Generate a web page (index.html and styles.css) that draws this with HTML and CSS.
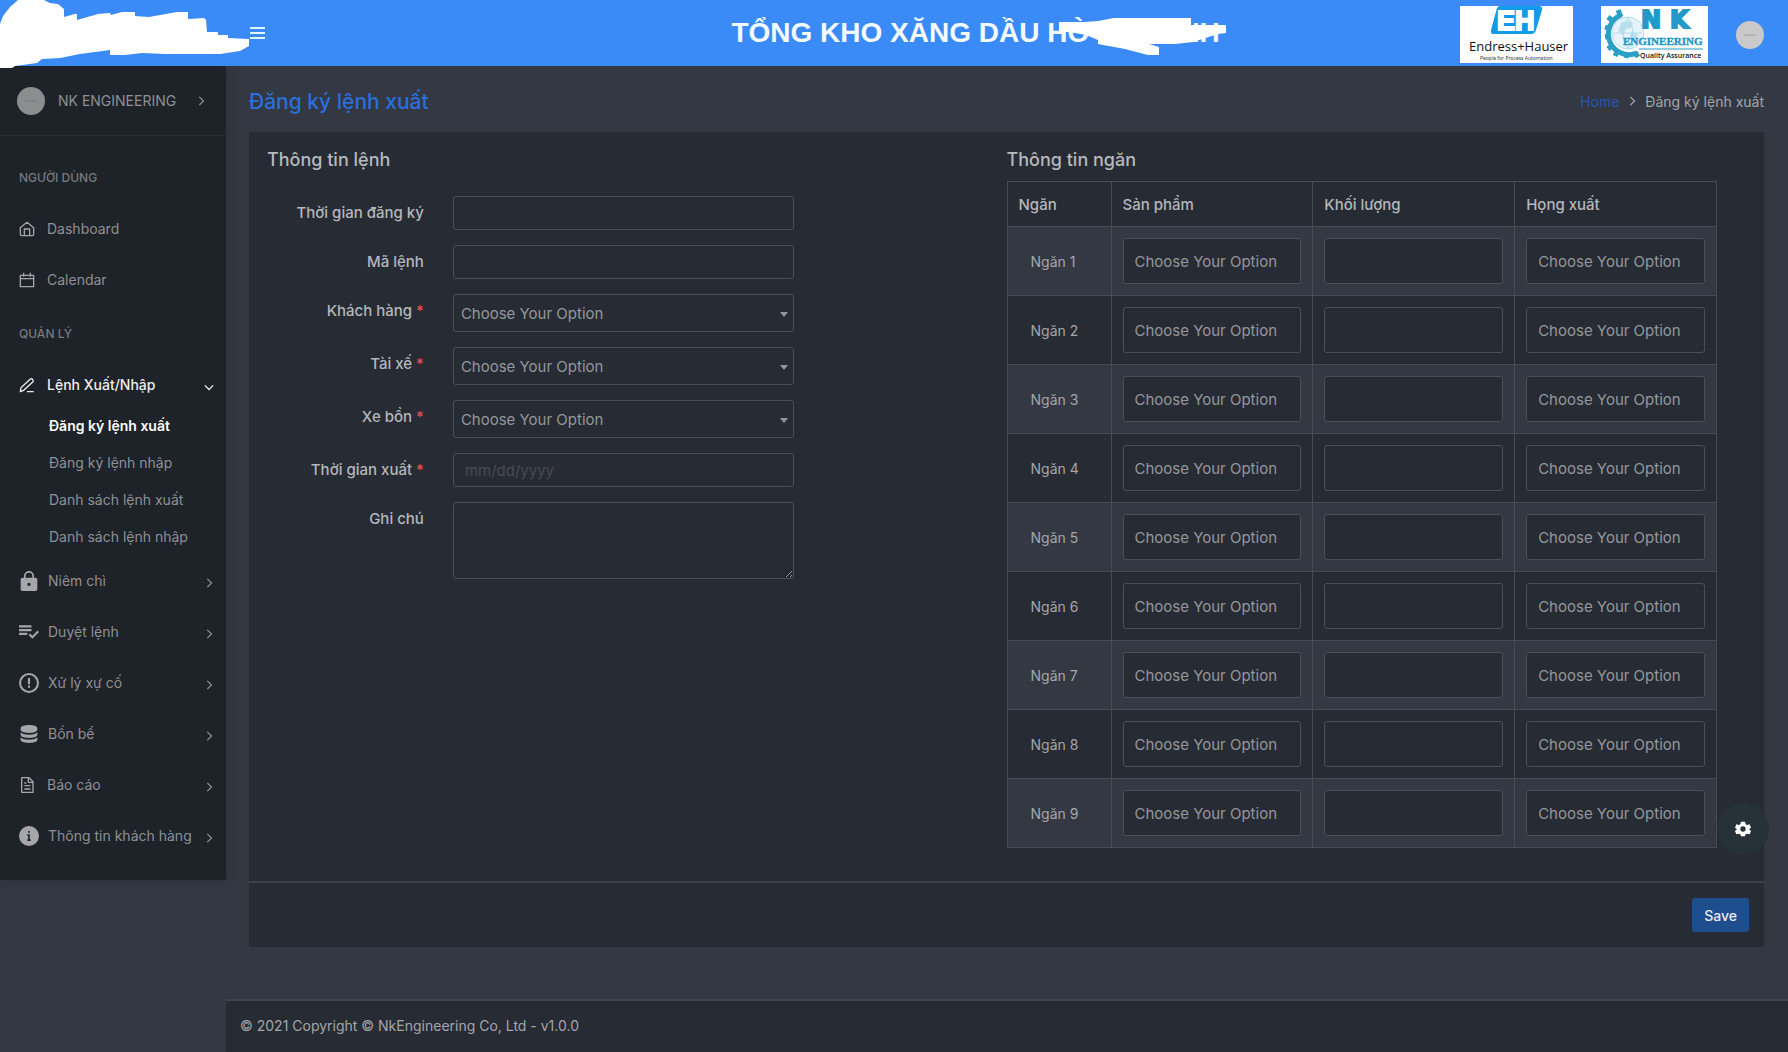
FILE: index.html
```html
<!DOCTYPE html>
<html lang="vi">
<head>
<meta charset="utf-8">
<title>Đăng ký lệnh xuất</title>
<link rel="stylesheet" href="styles.css">
</head>
<body>
<header class="topbar">
  <svg class="brand-mask" width="250" height="69" viewBox="0 0 250 69" aria-hidden="true"><path fill="#fff" d="M0 24 3 16 10 7 18 0H44L50 3 58 4 64 9V17L75 14H77V20L98 14 110 13 111 15 122 12H135V16L149 17 177 12H188V19L204 18 206 20 207 32H218V35H228V38L249 39V46L240 51 220 54H165L142 53 125 55H110V50L80 54 60 58 42 59 37 63 15 66 12 68H0Z"/></svg>
  <button class="menu-btn" type="button" aria-label="Menu"><span></span><span></span><span></span></button>
  <div class="title-wrap">
    <h1 class="site-title">TỔNG KHO XĂNG DẦU HÒ<span class="title-gap"></span>NH
      <svg class="title-mask" width="168" height="38" viewBox="0 0 168 38" aria-hidden="true"><path fill="#fff" d="M0 4H25L39 3 55 0H132V7H167V15L159 16 134 24 116 26H90L100 29V37H89L66 31 39 26V22L27 17 16 15 0 13Z"/></svg>
    </h1>
  </div>
  <div class="logos">
    <svg class="logo" width="113" height="57" viewBox="0 0 113 57" role="img" aria-label="Endress+Hauser">
      <rect width="113" height="57" fill="#fff"/>
      <path d="M39 0H79Q83 0 82 4L76 24Q75 28 71 28H34Q30 28 31 24L37 2Z" fill="#119be8"/>
      <text x="37" y="24" font-family="Liberation Sans" font-size="27" font-weight="700" fill="#fff" stroke="#fff" stroke-width="2">EH</text>
      <text x="9" y="45" font-family="Open Sans" font-size="13" fill="#111">Endress+Hauser</text>
      <text x="20" y="54" font-family="Noto Sans" font-size="5" fill="#333">People for Process Automation</text>
    </svg>
    <svg class="logo" width="107" height="57" viewBox="0 0 107 57" role="img" aria-label="NK Engineering, Quality Assurance">
      <rect width="107" height="57" fill="#fff"/>
      <path d="M20 9A19 19 0 0 0 36 47" fill="none" stroke="#2b9fc4" stroke-width="5"/>
      <path d="M20 11 17 4M13 16 7 11M10 23 4 21M9 30 4 31M12 39 7 43M17 44 14 50M26 47 25 52M34 46 37 51" stroke="#2b9fc4" stroke-width="5"/>
      <circle cx="27" cy="27" r="16" fill="#e5f4fa" stroke="#b5dcec"/>
      <path d="M20 17Q26 13 32 17L30 22 25 23 22 29 17 25ZM31 25 37 29 33 36 28 32Z" fill="#badfed"/>
      <path d="M13 27H41M27 11Q17 27 27 43M27 11Q37 27 27 43" fill="none" stroke="#b5dcec"/>
      <g font-family="DejaVu Sans" font-size="24" font-weight="700" fill="#2299c6" stroke="#2299c6" stroke-width="2"><text x="40" y="22">N</text><text x="69" y="22">K</text></g>
      <text x="22" y="39" font-family="Liberation Serif" font-size="11" font-weight="700" fill="#2299c6" stroke="#2299c6" stroke-width=".4">ENGINEERING</text>
      <path d="M38 43H102" stroke="#2299c6"/>
      <text x="39" y="52" font-family="Open Sans" font-size="7" font-weight="600" fill="#111">Quality Assurance</text>
    </svg>
  </div>
  <a class="avatar avatar-top" href="#" aria-label="Tài khoản"><span></span></a>
</header>

<div class="shell">
  <aside class="sidebar">
    <a class="user" href="#">
      <span class="avatar"><span></span></span>
      <span class="user-name">NK ENGINEERING</span>
      <svg class="chev" viewBox="0 0 12 12"><path d="M4 1 9 6 4 11"/></svg>
    </a>
    <nav class="nav">
      <h2 class="nav-head">NGƯỜI DÙNG</h2>
      <a class="item" href="#"><svg class="ico line" viewBox="0 0 24 24"><path d="M2 10 12 2l10 8v10a2 2 0 0 1-2 2H4a2 2 0 0 1-2-2ZM8 22V12h8v10"/></svg>Dashboard</a>
      <a class="item" href="#"><svg class="ico line" viewBox="0 0 24 24"><path d="M2 5h20v17H2ZM2 10h20M7 1v6M17 1v6"/></svg>Calendar</a>
      <h2 class="nav-head">QUẢN LÝ</h2>
      <a class="item open" href="#"><svg class="ico line" viewBox="0 0 24 24"><path d="M12 22h10M17 3a3 3 0 0 1 4 4L7 20l-5 2 1-6Z"/></svg>Lệnh Xuất/Nhập<svg class="chev" viewBox="0 0 12 12"><path d="M1 4 6 9 11 4"/></svg></a>
      <div class="sub">
        <a class="current" href="#">Đăng ký lệnh xuất</a>
        <a href="#">Đăng ký lệnh nhập</a>
        <a href="#">Danh sách lệnh xuất</a>
        <a href="#">Danh sách lệnh nhập</a>
      </div>
      <a class="item" href="#"><svg class="ico big" viewBox="0 0 24 24"><path fill-rule="evenodd" d="M20 8h-2V6A6 6 0 0 0 6 6v2H4a2 2 0 0 0-2 2v12c0 1 1 2 2 2h16c1 0 2-1 2-2V10c0-1-1-2-2-2ZM12 18a2 2 0 1 1 0-4 2 2 0 0 1 0 4ZM8 8V6a4 4 0 0 1 8 0v2Z"/></svg>Niêm chì<svg class="chev" viewBox="0 0 12 12"><path d="M4 1 9 6 4 11"/></svg></a>
      <a class="item" href="#"><svg class="ico big" viewBox="0 0 24 24"><path d="M0 4h15v2.500H0ZM0 8.500h15V11H0ZM0 13h10v2.500H0ZM24 12l-8 8L11.500 15.500l1.800-1.800L16 16.400l6.200-6.200Z"/></svg>Duyệt lệnh<svg class="chev" viewBox="0 0 12 12"><path d="M4 1 9 6 4 11"/></svg></a>
      <a class="item" href="#"><svg class="ico big" viewBox="0 0 24 24"><path fill-rule="evenodd" d="M12 0a12 12 0 1 0 0 24 12 12 0 0 0 0-24ZM12 2.500a9.500 9.500 0 1 1 0 19 9.500 9.500 0 0 1 0-19ZM10.700 6h2.600v7.500h-2.600ZM10.700 15h2.600v2.600h-2.600Z"/></svg>Xử lý xự cố<svg class="chev" viewBox="0 0 12 12"><path d="M4 1 9 6 4 11"/></svg></a>
      <a class="item" href="#"><svg class="ico big" viewBox="0 0 24 24"><path d="M2 5c0-5 20-5 20 0v2c0 5-20 5-20 0ZM2 10c3 4 17 4 20 0v3c0 5-20 5-20 0ZM2 16c3 4 17 4 20 0v3c0 5-20 5-20 0Z"/></svg>Bồn bể<svg class="chev" viewBox="0 0 12 12"><path d="M4 1 9 6 4 11"/></svg></a>
      <a class="item" href="#"><svg class="ico line" viewBox="0 0 24 24"><path d="M4 1h11l6 6v16H4ZM14 1v7h7M8 9h3M8 13h9M8 18h9"/></svg>Báo cáo<svg class="chev" viewBox="0 0 12 12"><path d="M4 1 9 6 4 11"/></svg></a>
      <a class="item" href="#"><svg class="ico big" viewBox="0 0 24 24"><path fill-rule="evenodd" d="M12 0a12 12 0 1 0 0 24 12 12 0 0 0 0-24ZM11 6h2v2h-2ZM10 10h3v6h1v2h-4v-2h1v-4h-1Z"/></svg>Thông tin khách hàng<svg class="chev" viewBox="0 0 12 12"><path d="M4 1 9 6 4 11"/></svg></a>
    </nav>
  </aside>

  <div class="page">
    <main class="content">
      <div class="page-head">
        <h2 class="page-title">Đăng ký lệnh xuất</h2>
        <nav class="crumbs"><a href="#">Home</a><svg class="chev" viewBox="0 0 12 12"><path d="M4 1 9 6 4 11"/></svg><span>Đăng ký lệnh xuất</span></nav>
      </div>
      <form class="card">
        <div class="card-body">
          <section class="info">
            <h3>Thông tin lệnh</h3>
            <div class="row"><label for="reg">Thời gian đăng ký</label><input class="field" id="reg" type="text"></div>
            <div class="row"><label for="code">Mã lệnh</label><input class="field" id="code" type="text"></div>
            <div class="row"><label for="cust">Khách hàng <b>*</b></label><div class="select"><select class="field" id="cust"><option>Choose Your Option</option></select></div></div>
            <div class="row"><label for="driver">Tài xế <b>*</b></label><div class="select"><select class="field" id="driver"><option>Choose Your Option</option></select></div></div>
            <div class="row"><label for="truck">Xe bồn <b>*</b></label><div class="select"><select class="field" id="truck"><option>Choose Your Option</option></select></div></div>
            <div class="row"><label for="date">Thời gian xuất <b>*</b></label><input class="field" id="date" type="text" placeholder="mm/dd/yyyy"></div>
            <div class="row"><label for="note">Ghi chú</label><textarea class="field" id="note"></textarea></div>
          </section>
          <section class="slots">
            <h3>Thông tin ngăn</h3>
            <table>
              <thead><tr><th class="c-slot">Ngăn</th><th>Sản phẩm</th><th>Khối lượng</th><th>Họng xuất</th></tr></thead>
              <tbody>
                <tr><td>Ngăn 1</td><td><select class="field" aria-label="Sản phẩm 1"><option>Choose Your Option</option></select></td><td><input class="field" aria-label="Khối lượng 1"></td><td><select class="field" aria-label="Họng xuất 1"><option>Choose Your Option</option></select></td></tr>
                <tr><td>Ngăn 2</td><td><select class="field" aria-label="Sản phẩm 2"><option>Choose Your Option</option></select></td><td><input class="field" aria-label="Khối lượng 2"></td><td><select class="field" aria-label="Họng xuất 2"><option>Choose Your Option</option></select></td></tr>
                <tr><td>Ngăn 3</td><td><select class="field" aria-label="Sản phẩm 3"><option>Choose Your Option</option></select></td><td><input class="field" aria-label="Khối lượng 3"></td><td><select class="field" aria-label="Họng xuất 3"><option>Choose Your Option</option></select></td></tr>
                <tr><td>Ngăn 4</td><td><select class="field" aria-label="Sản phẩm 4"><option>Choose Your Option</option></select></td><td><input class="field" aria-label="Khối lượng 4"></td><td><select class="field" aria-label="Họng xuất 4"><option>Choose Your Option</option></select></td></tr>
                <tr><td>Ngăn 5</td><td><select class="field" aria-label="Sản phẩm 5"><option>Choose Your Option</option></select></td><td><input class="field" aria-label="Khối lượng 5"></td><td><select class="field" aria-label="Họng xuất 5"><option>Choose Your Option</option></select></td></tr>
                <tr><td>Ngăn 6</td><td><select class="field" aria-label="Sản phẩm 6"><option>Choose Your Option</option></select></td><td><input class="field" aria-label="Khối lượng 6"></td><td><select class="field" aria-label="Họng xuất 6"><option>Choose Your Option</option></select></td></tr>
                <tr><td>Ngăn 7</td><td><select class="field" aria-label="Sản phẩm 7"><option>Choose Your Option</option></select></td><td><input class="field" aria-label="Khối lượng 7"></td><td><select class="field" aria-label="Họng xuất 7"><option>Choose Your Option</option></select></td></tr>
                <tr><td>Ngăn 8</td><td><select class="field" aria-label="Sản phẩm 8"><option>Choose Your Option</option></select></td><td><input class="field" aria-label="Khối lượng 8"></td><td><select class="field" aria-label="Họng xuất 8"><option>Choose Your Option</option></select></td></tr>
                <tr><td>Ngăn 9</td><td><select class="field" aria-label="Sản phẩm 9"><option>Choose Your Option</option></select></td><td><input class="field" aria-label="Khối lượng 9"></td><td><select class="field" aria-label="Họng xuất 9"><option>Choose Your Option</option></select></td></tr>
              </tbody>
            </table>
          </section>
        </div>
        <div class="card-foot"><button class="save" type="button">Save</button></div>
      </form>
    </main>
    <footer class="footer">© 2021 Copyright © NkEngineering Co, Ltd - v1.0.0</footer>
  </div>
</div>
<button class="gear" type="button" aria-label="Cài đặt"><svg width="16" height="16" viewBox="0 0 24 24"><path fill="#fff" fill-rule="evenodd" d="M9 1h6l1 4 2 1 4-1 2 5-3 2.500 3 2.500-2 5-4-1-2 1-1 3H9l-1-3-2-1-4 1-2-5 3-2.500L0 10l2-5 4 1 2-1ZM12 8a4 4 0 1 0 0 8 4 4 0 0 0 0-8Z"/></svg></button>
</body>
</html>
```
FILE: styles.css
```css
* { box-sizing: border-box; }
body {
  margin: 0;
  min-height: 100vh;
  display: flex;
  flex-direction: column;
  background: #343843;
  color: #a3a6ab;
  font-family: Inter, "Noto Sans", sans-serif;
  font-size: 14px;
}
h1, h2, h3 { margin: 0; }
a { color: inherit; text-decoration: none; }
button, input, select, textarea { font: inherit; color: inherit; }

.topbar {
  position: relative;
  z-index: 2;
  display: flex;
  align-items: center;
  height: 66px;
  padding: 0 24px 0 250px;
  background: #3a8bf7;
}
.brand-mask { position: absolute; left: 0; top: 0; }
.menu-btn {
  display: flex;
  flex-direction: column;
  gap: 3px;
  width: 15px;
  padding: 0;
  border: 0;
  background: none;
}
.menu-btn span { height: 2px; background: #dff6ff; }
.title-wrap {
  flex: 1;
  display: flex;
  justify-content: center;
  padding-left: 226px;
}
.site-title {
  position: relative;
  color: #f4fbff;
  font: 700 28px/32px "Liberation Sans", Arial, sans-serif;
  white-space: nowrap;
}
.title-gap { display: inline-block; width: 90px; }
.title-mask { position: absolute; right: -7px; top: 1px; }
.logos { display: flex; gap: 28px; padding-top: 3px; margin-right: 28px; }
.logo { display: block; overflow: hidden; }
.avatar {
  display: flex;
  align-items: center;
  justify-content: center;
  width: 28px;
  height: 28px;
  border-radius: 50%;
  background: #8c8d8f;
}
.avatar span { width: 12px; height: 2px; background: #808183; }
.avatar-top { margin-top: 4px; background: #c9c9c9; }
.avatar-top span { background: #b4b4b4; }

.shell { flex: 1; display: flex; align-items: flex-start; }
.sidebar {
  width: 226px;
  flex: none;
  background: #1e2229;
  color: #8e9094;
  box-shadow: 2px 2px 10px rgba(20, 24, 30, 0.2);
}
.user {
  display: flex;
  align-items: center;
  height: 70px;
  padding: 0 20px 0 17px;
  border-bottom: 1px solid #2b2f36;
}
.user-name { flex: 1; margin-left: 13px; }
.chev {
  width: 10px;
  height: 10px;
  margin-left: auto;
  fill: none;
  stroke: currentColor;
  stroke-width: 1.5;
}
.nav { padding: 13px 0 19px; }
.nav-head {
  height: 54px;
  padding: 4px 19px 0;
  color: #777a7e;
  font-size: 12px;
  font-weight: 500;
  line-height: 50px;
}
.item {
  display: flex;
  align-items: center;
  height: 51px;
  padding: 0 12px 0 19px;
}
.item .chev { margin-top: 4px; }
.ico { width: 16px; height: 16px; margin-right: 12px; fill: currentColor; color: #a4a6a9; }
.line { fill: none; stroke: currentColor; stroke-width: 2; stroke-linejoin: round; }
.big { width: 20px; height: 20px; margin-right: 9px; }
.open, .open .ico { color: #eceef0; font-weight: 500; }
.sub { margin-top: -3px; padding-left: 49px; line-height: 37px; }
.sub a { display: block; }
.sub .current { color: #fff; font-weight: 600; }

.page {
  flex: 1;
  align-self: stretch;
  display: flex;
  flex-direction: column;
  justify-content: space-between;
  min-width: 0;
}
.content { padding: 0 24px 52px 23px; }
.page-head {
  display: flex;
  align-items: center;
  justify-content: space-between;
  height: 66px;
  padding-top: 4px;
}
.page-title { color: #2a6fdb; font-size: 21px; font-weight: 500; }
.crumbs { display: flex; align-items: center; gap: 8px; color: #a3a6ab; }
.crumbs a { color: #2757b5; }
.card { background: #272b33; }
.card-body {
  display: grid;
  grid-template-columns: 1fr 1fr;
  padding: 15px 18px 33px;
}
.card h3 { color: #b6b9bd; font-size: 18px; font-weight: 500; line-height: 26px; }
.info h3 { margin-bottom: 23px; }
.row {
  display: grid;
  grid-template-columns: 157fr 341fr 184fr;
  column-gap: 29px;
  margin-bottom: 15px;
}
.row label {
  color: #b4b7bb;
  font-size: 15px;
  font-weight: 500;
  line-height: 34px;
  text-align: right;
  white-space: nowrap;
}
.row label b { color: #d9535a; font-weight: 500; }
.field {
  display: block;
  width: 100%;
  height: 34px;
  padding: 0 11px;
  border: 1px solid #4b4f57;
  border-radius: 3px;
  background: #272b33;
  color: #94979c;
  font-size: 15px;
  appearance: none;
  outline: 0;
}
.field::placeholder { color: #484c54; opacity: 1; }
.select { position: relative; }
.select .field { height: 38px; padding: 0 7px; }
.select::after {
  content: "";
  position: absolute;
  right: 6px;
  top: 18px;
  border: 4px solid transparent;
  border-top: 5px solid #94979c;
  border-bottom: 0;
}
textarea.field { height: 77px; }

.slots { padding-right: 29px; }
.slots h3 { margin-bottom: 8px; }
table { width: 100%; border-collapse: collapse; table-layout: fixed; }
th, td { border: 1px solid #484c54; padding: 0 11px; }
th { height: 45px; color: #b4b7bb; font-size: 15px; font-weight: 500; text-align: left; }
.c-slot { width: 104px; }
td { height: 69px; }
td:first-child { padding-left: 23px; }
tbody tr:nth-child(odd) { background: #343843; }
td .field { height: 46px; }
.card-foot {
  display: flex;
  justify-content: flex-end;
  padding: 15px;
  border-top: 2px solid #3c4048;
}
.save {
  height: 34px;
  padding: 0 12px;
  border: 0;
  border-radius: 3px;
  background: #1f4e8f;
  color: #e6ebf3;
  font-weight: 500;
}
.footer {
  padding: 14px 14px 16px;
  border-top: 2px solid #40444d;
  background: #272b33;
  line-height: 22px;
}
.gear {
  position: fixed;
  z-index: 3;
  right: 19px;
  bottom: 197px;
  display: flex;
  align-items: center;
  justify-content: center;
  width: 52px;
  height: 52px;
  padding: 0;
  border: 0;
  border-radius: 50%;
  background: #263238;
}
```
